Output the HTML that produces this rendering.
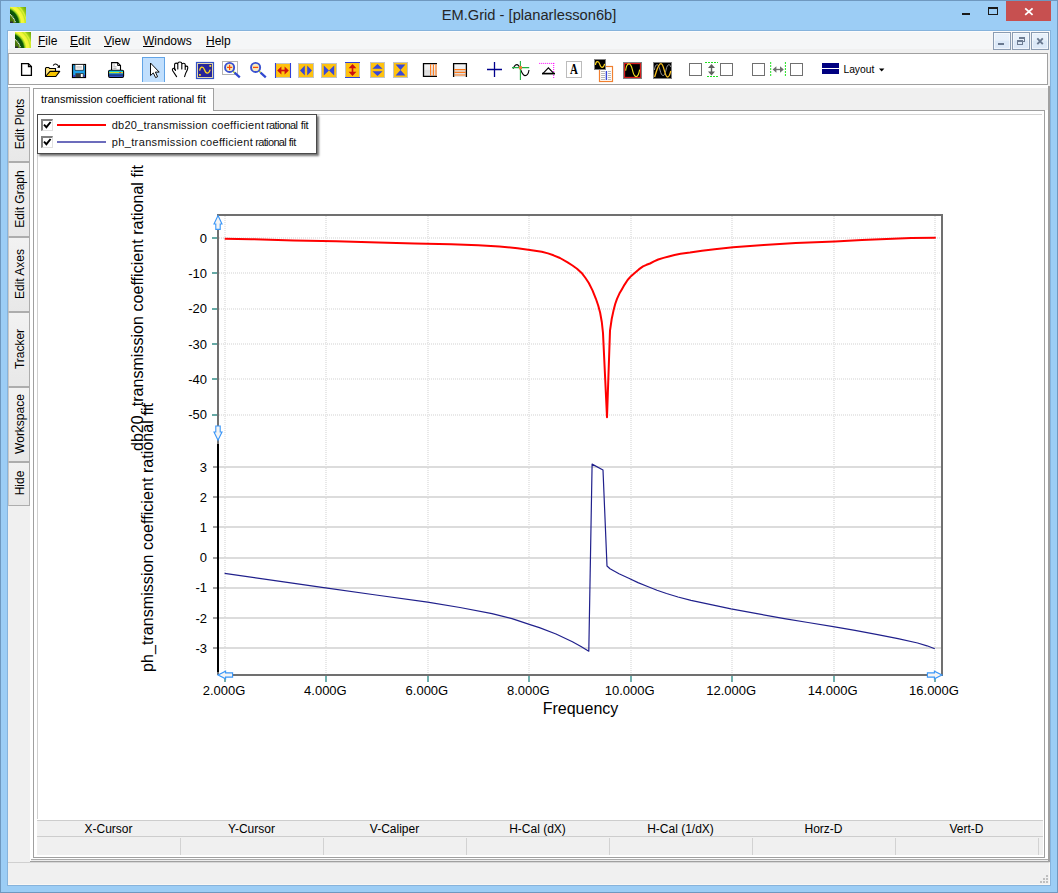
<!DOCTYPE html>
<html><head><meta charset="utf-8"><style>
*{box-sizing:border-box;margin:0;padding:0}
html,body{width:1058px;height:893px;overflow:hidden}
body{position:relative;background:#9ccdf5;font-family:"Liberation Sans",sans-serif;color:#000}
.a{position:absolute}
.t{position:absolute;white-space:nowrap;line-height:1}
svg{position:absolute;overflow:visible}
.vt{position:absolute;white-space:nowrap;line-height:1;transform-origin:0 0;transform:rotate(-90deg)}
.stab{position:absolute;left:8px;width:22px;background:#f0f0f0;border:1px solid #adadad;border-left-color:#c8c8c8}
.hd{position:absolute;top:822px;height:14px;font-size:12px;line-height:14px;text-align:center;white-space:nowrap;color:#000}
.sep{position:absolute;top:838px;width:1px;height:17px;background:#d2d2d2}
.mi{top:35px;font-size:12px;color:#000}
.mi u{text-decoration:underline;text-underline-offset:1px}
.mb{position:absolute;top:32px;width:18px;height:18px;border:1px solid #8b9cb2;box-shadow:inset 0 0 0 1px rgba(255,255,255,0.55);background:linear-gradient(#e9f1fb 0,#e7f0fa 45%,#dbe8f7 50%,#dde9f8 100%)}
.stab{background:linear-gradient(#f2f2f2,#e8e8e8)}
.vtc{position:absolute;left:19.8px;white-space:nowrap;line-height:1;font-size:12px;transform:translate(-50%,-50%) rotate(-90deg)}
.cb{position:absolute;left:41px;width:12px;height:12px;background:#fff;border:1px solid #e0e0e0;border-top:2px solid #808080;border-left:2px solid #808080}
</style></head><body>
<svg width="0" height="0" style="position:absolute"><defs>
<clipPath id="icl"><rect width="16" height="16"/></clipPath>
<radialGradient id="icg" gradientUnits="userSpaceOnUse" cx="-7" cy="17" r="30">
<stop offset="0.30" stop-color="#3c6a0a"/><stop offset="0.39" stop-color="#5f8a10"/>
<stop offset="0.41" stop-color="#0a4a08"/><stop offset="0.52" stop-color="#0c5a0a"/>
<stop offset="0.57" stop-color="#9fd820"/><stop offset="0.62" stop-color="#f6f93c"/><stop offset="0.70" stop-color="#f2f53a"/>
<stop offset="0.74" stop-color="#c0e626"/><stop offset="0.78" stop-color="#dcef34"/><stop offset="0.82" stop-color="#9ccf18"/><stop offset="0.9" stop-color="#78b00e"/><stop offset="1" stop-color="#6aa40a"/>
</radialGradient>

</defs></svg>
<!-- window frame -->
<div class="a" style="left:0;top:0;width:1058px;height:893px;border:1px solid #6f98bf"></div>
<div class="a" style="left:7px;top:30px;width:1044px;height:856px;border:1px solid #86b3dc"></div>
<!-- client bg -->
<div class="a" style="left:8px;top:31px;width:1042px;height:854px;background:#f0f0f0"></div>
<!-- TITLE -->
<div id="title">
<svg class="a" style="left:10px;top:7px" width="16" height="16" viewBox="0 0 16 16"><g clip-path="url(#icl)"><rect width="16" height="16" fill="url(#icg)"/>
<path d="M0 7.4 L2.6 9.6 L4.4 12.6 L5.7 16" fill="none" stroke="#f6f6f6" stroke-width="1.15" stroke-dasharray="1 0.7"/>
<rect x="0" y="14.5" width="3" height="1.5" fill="#2c2c3c"/>
</g></svg>
<div class="t" id="ttext" style="left:0;width:1058px;text-align:center;top:8px;font-size:14.7px;color:#262626">EM.Grid - [planarlesson6b]</div>
<div class="a" style="left:962px;top:13px;width:8px;height:2px;background:#1a1a1a"></div>
<div class="a" style="left:988px;top:7px;width:10px;height:8px;border:1px solid #1a1a1a;border-top-width:2px"></div>
<div class="a" style="left:1006px;top:1px;width:45px;height:20px;background:#c75050"></div>
<svg class="a" style="left:1023px;top:6px" width="12" height="11" viewBox="0 0 12 11"><path d="M2.2 2.3 L9.6 8.9 M9.6 2.3 L2.2 8.9" stroke="#fff" stroke-width="1.8" fill="none"/></svg>
</div>
<!-- MENU -->
<div id="menu">
<div class="a" style="left:8px;top:31px;width:1042px;height:18px;background:#f5f6f7;border-top:1px solid #fcfcfd;border-left:1px solid #fbfbfc"></div>
<svg class="a" style="left:15px;top:32px" width="16" height="16" viewBox="0 0 16 16"><g clip-path="url(#icl)"><rect width="16" height="16" fill="url(#icg)"/>
<path d="M0 7.4 L2.6 9.6 L4.4 12.6 L5.7 16" fill="none" stroke="#f6f6f6" stroke-width="1.15" stroke-dasharray="1 0.7"/>
<rect x="0" y="14.5" width="3" height="1.5" fill="#2c2c3c"/>
</g></svg>
<div class="t mi" style="left:38px"><u>F</u>ile</div>
<div class="t mi" style="left:70px"><u>E</u>dit</div>
<div class="t mi" style="left:104px"><u>V</u>iew</div>
<div class="t mi" style="left:143px"><u>W</u>indows</div>
<div class="t mi" style="left:206px"><u>H</u>elp</div>
<div class="mb" style="left:993px"><div class="a" style="left:4px;top:10px;width:6px;height:2px;background:#697990"></div></div>
<div class="mb" style="left:1012px"><svg width="16" height="16" viewBox="0 0 16 16" style="left:0;top:0" shape-rendering="crispEdges"><g fill="#6d7c92"><rect x="6" y="4" width="6" height="2"/><rect x="11" y="6" width="1" height="3"/><rect x="10" y="8" width="2" height="1"/><rect x="4" y="7" width="6" height="2"/><rect x="4" y="9" width="1" height="3"/><rect x="9" y="9" width="1" height="3"/><rect x="4" y="11" width="6" height="1"/></g></svg></div>
<div class="mb" style="left:1031px"><svg width="16" height="16" viewBox="0 0 16 16" style="left:0;top:0"><path d="M5.3 5.4 L10.8 11.2 M10.8 5.4 L5.3 11.2" stroke="#697990" stroke-width="1.9" fill="none"/></svg></div>
</div>
<!-- TOOLBAR -->
<div id="toolbar">
<div class="a" style="left:8px;top:53px;width:1040px;height:32px;background:#fff;border:1px solid #a0a0a0;border-left-color:#b4b4b4"></div>
<div id="icons">
<div class="a" style="left:142px;top:57px;width:23px;height:25px;background:#c1dffd;border:1px solid #62a4e6;border-bottom:none"></div>
<svg style="left:0;top:0" width="1058" height="100" viewBox="0 0 1058 100">
<!-- new -->
<path d="M21.6 63.6 H28.4 L31.4 66.6 V75.4 H21.6 Z" fill="#fff" stroke="#000" stroke-width="1.3"/>
<path d="M28.4 63.6 V66.6 H31.4" fill="none" stroke="#000" stroke-width="1.1"/>
<!-- open -->
<path d="M45.5 76.5 V68.5 L46.2 67.5 H48.8 L49.5 68.5 H55.5 V71.5" fill="#ffe680" stroke="#000" stroke-width="1.1"/>
<path d="M45.5 76.5 L50 71.4 H59.7 L55.8 76.5 Z" fill="#f5c400" stroke="#000" stroke-width="1.1" stroke-linejoin="round"/>
<path d="M53.2 65.6 Q54 63.8 55.8 64 Q57.6 64.3 59 67" fill="none" stroke="#000" stroke-width="1.1"/>
<path d="M57 67.8 H60 V64.8 Z" fill="#000"/>
<!-- save -->
<rect x="72.5" y="64.5" width="13" height="13" fill="#1fa2ea" stroke="#000" stroke-width="1.2"/>
<rect x="73.2" y="75" width="2" height="2" fill="#3838c8"/><rect x="83.8" y="75" width="1.2" height="2" fill="#3838c8"/>
<rect x="75" y="64.8" width="8.5" height="5.4" fill="#fff"/><path d="M75 65 V70.3 H83.5 V65" fill="none" stroke="#202020" stroke-width="0.7"/>
<rect x="76.3" y="66" width="5.6" height="2.6" fill="#d6d6d6"/>
<rect x="75.4" y="73.2" width="8.3" height="4" fill="#3a3a3a"/><rect x="80.8" y="74" width="2" height="3" fill="#fff"/>
<rect x="84" y="65.2" width="1" height="1" fill="#b0b0b0"/>
<!-- print -->
<path d="M111.6 70 V62.6 H117.6 L120.5 65.5 V70" fill="#fff" stroke="#000" stroke-width="1.1"/>
<path d="M117.6 62.6 V65.5 H120.5" fill="none" stroke="#000" stroke-width="0.9"/>
<path d="M113.3 65 H115 M113.3 66.8 H116.5 M113.3 68.4 H116.5" stroke="#909090" stroke-width="0.7"/>
<rect x="108.6" y="70.2" width="15" height="7.3" rx="1.4" fill="#3050c0" stroke="#000" stroke-width="1.1"/>
<rect x="109.2" y="70.8" width="13.8" height="1.2" fill="#10c8d8"/>
<rect x="109.2" y="72" width="13.8" height="1.3" fill="#c8e428"/><rect x="119.3" y="72" width="1.8" height="1.3" fill="#f03030"/>
<rect x="109.2" y="73.3" width="13.8" height="1.2" fill="#20a0d8"/>
<rect x="109.2" y="74.5" width="13.8" height="1" fill="#102468"/>
<!-- arrow cursor -->
<path d="M150.5 63 V75.6 L153.3 72.9 L155.6 77.6 L157.6 76.7 L155.4 72.1 H159.2 Z" fill="#fff" stroke="#000" stroke-width="0.95" stroke-linejoin="miter"/>
<!-- hand -->
<path d="M176.6 76.6 L172.7 70.8 C171.9 69.2 172.7 68.2 173.9 68.2 C175 68.2 175.4 69.2 175.4 70.4 M174.6 69.4 V64.4 C174.6 62.7 177.8 62.7 177.8 64.4 V69 M177.8 64.4 V63.4 C177.8 61.5 181.8 61.5 181.8 63.4 V69 M181.8 64.6 C181.8 62.8 185.2 62.8 185.2 64.6 V69.4 M185.2 67.4 C185.4 65.6 187.9 65.8 187.8 67.6 C187.7 70 186.6 71.4 185.7 73.2 L184.6 76.6" fill="none" stroke="#000" stroke-width="1.1" stroke-linecap="round" stroke-linejoin="round"/>
<!-- wave box -->
<rect x="196.5" y="62.5" width="17" height="16" fill="#f3e4a8" stroke="#3454c8" stroke-width="1.2"/>
<rect x="198" y="64" width="14" height="13" fill="#26269c"/>
<path d="M199.6 70.6 C200.6 66.4 203 66 204.6 70 C206 74 208.6 74.4 210.2 69.6" fill="none" stroke="#ffd820" stroke-width="1.3"/>
<rect x="209.4" y="65" width="1.8" height="1.8" fill="#ffd820"/><rect x="199" y="74" width="1.8" height="1.8" fill="#ffd820"/>
<!-- zoom in -->
<rect x="222.5" y="61.5" width="15" height="13" fill="#fff" stroke="#b4b4b4" stroke-width="1"/>
<path d="M233 71.2 L234.8 73" stroke="#a8c830" stroke-width="1.6"/>
<path d="M234.6 72.6 L239.8 77.4" stroke="#3048d0" stroke-width="2.2"/>
<circle cx="229.6" cy="67.4" r="4.55" fill="#f6ebbe" stroke="#3a50d0" stroke-width="1.9"/>
<path d="M227 67.4 H232.2 M229.6 64.8 V70" stroke="#ff4a00" stroke-width="1.2"/>
<!-- zoom out -->
<path d="M259 71 L260.8 72.8" stroke="#a8c830" stroke-width="1.6"/>
<path d="M260.6 72.6 L265.8 77.4" stroke="#3048d0" stroke-width="2.2"/>
<circle cx="255.6" cy="67.4" r="4.55" fill="#f6ebbe" stroke="#3a50d0" stroke-width="1.9"/>
<path d="M253 67.4 H258.2" stroke="#ff4a00" stroke-width="1.3"/>
<!-- hfit -->
<rect x="275" y="63.5" width="16" height="14" fill="#ffc20e"/><path d="M275 63.5 H291 M275 77.5 H291" stroke="#c4c4c4" stroke-width="1"/>
<path d="M275.5 63 V78 M290.5 63 V78" stroke="#3040d8" stroke-width="1.1"/>
<path d="M277.2 70.5 L281.4 66.6 V74.4 Z M288.8 70.5 L284.6 66.6 V74.4 Z" fill="#cc1010"/><path d="M280 70.5 H286" stroke="#cc1010" stroke-width="1.6"/>
<!-- hexpand -->
<rect x="298.5" y="63.5" width="15" height="14" fill="#ffc20e" stroke="#c4c4c4" stroke-width="1"/>
<path d="M300 70.5 L304.8 65.4 V75.6 Z M312 70.5 L307.2 65.4 V75.6 Z" fill="#3848d8"/>
<!-- hcontract -->
<rect x="321.5" y="63.5" width="15" height="14" fill="#ffc20e" stroke="#c4c4c4" stroke-width="1"/>
<path d="M323.8 65.4 L329 70.5 L323.8 75.6 Z M334.2 65.4 L329 70.5 L334.2 75.6 Z" fill="#3848d8"/>
<!-- vfit -->
<rect x="345.5" y="62.5" width="14" height="15" fill="#ffc20e"/><path d="M345.5 62.5 V77.5 M359.5 62.5 V77.5" stroke="#c4c4c4" stroke-width="1"/>
<path d="M345 62.5 H360 M345 77.5 H360" stroke="#3040d8" stroke-width="1.1"/>
<path d="M352.5 64 L356.4 68.2 H348.6 Z M352.5 76 L356.4 71.8 H348.6 Z" fill="#cc1010"/><path d="M352.5 67 V73" stroke="#cc1010" stroke-width="1.6"/>
<!-- vexpand -->
<rect x="370.5" y="62.5" width="14" height="15" fill="#ffc20e" stroke="#c4c4c4" stroke-width="1"/>
<path d="M377.5 64 L382.6 68.8 H372.4 Z M377.5 76 L382.6 71.2 H372.4 Z" fill="#3848d8"/>
<!-- vcontract -->
<rect x="393.5" y="62.5" width="14" height="15" fill="#ffc20e" stroke="#c4c4c4" stroke-width="1"/>
<path d="M395.6 64.6 H405.4 L400.5 70 Z M395.6 75.4 H405.4 L400.5 70 Z" fill="#3848d8"/>
<!-- vcursors -->
<defs><linearGradient id="gg" x1="0" y1="0" x2="0" y2="1"><stop offset="0" stop-color="#f6f6f6"/><stop offset="0.5" stop-color="#ececec"/><stop offset="0.55" stop-color="#dcdcdc"/><stop offset="1" stop-color="#e6e6e6"/></linearGradient></defs>
<rect x="423.5" y="63.5" width="13.5" height="13" fill="url(#gg)"/>
<path d="M437 63.6 H423.5 V76.4 H437" fill="none" stroke="#000" stroke-width="1.3"/>
<path d="M430.6 64.2 V75.8 M433.4 64.2 V75.8 M436 64.2 V75.8" stroke="#ff7a1a" stroke-width="1.1"/>
<!-- hcursors -->
<rect x="453.5" y="63.5" width="13" height="13.5" fill="url(#gg)"/>
<path d="M453.6 77 V63.6 H466.4 V77" fill="none" stroke="#000" stroke-width="1.3"/>
<path d="M454.2 69.6 H465.8 M454.2 72.4 H465.8 M454.2 75 H465.8" stroke="#ff7a1a" stroke-width="1.1"/>
<!-- plus -->
<path d="M487 69.5 H502 M494.5 62 V77" stroke="#00008c" stroke-width="1.3"/>
<!-- curve cursor -->
<path d="M513.2 68.6 C514.4 65.4 516.6 63.4 518.6 65.6 C520.6 68 521.8 75.4 524.8 75.6 C527.2 75.8 528.6 73 529 70" fill="none" stroke="#000" stroke-width="1.1"/>
<path d="M512 67.6 H529.2 M520.4 61 V80" stroke="#22b040" stroke-width="1.1"/>
<rect x="519" y="66.2" width="3" height="3" fill="#f08030"/>
<!-- slope -->
<path d="M539.2 63.4 H554.2" stroke="#ff00ff" stroke-width="1" stroke-dasharray="1 1"/>
<path d="M553.7 63 V78" stroke="#ff00ff" stroke-width="1" stroke-dasharray="1 1"/>
<path d="M542.8 73.6 L548.4 67.8 L554 73.6" fill="none" stroke="#000" stroke-width="1.1"/><path d="M542 73.6 H555" stroke="#000" stroke-width="1.7"/>
<!-- A -->
<rect x="566.5" y="61.5" width="15" height="16" fill="#fff" stroke="#bcbcbc" stroke-width="1"/>
<text transform="translate(574 74.4) scale(0.78 1)" font-family="Liberation Serif" font-weight="bold" font-size="14" text-anchor="middle" fill="#000">A</text>
<!-- wave+doc -->
<rect x="599.5" y="66.5" width="13" height="15" fill="#fff" stroke="#f08030" stroke-width="1.2"/>
<g shape-rendering="crispEdges" fill="#b8b8b8"><rect x="601" y="71" width="4" height="1"/><rect x="608" y="71" width="3" height="1"/><rect x="601" y="73" width="4" height="1"/><rect x="608" y="73" width="3" height="1"/><rect x="601" y="75" width="4" height="1"/><rect x="608" y="75" width="3" height="1"/><rect x="601" y="77" width="4" height="1"/><rect x="608" y="77" width="3" height="1"/><rect x="601" y="79" width="4" height="1"/><rect x="608" y="79" width="3" height="1"/></g>
<rect x="605.7" y="71" width="1.4" height="9" fill="#3848d8"/>
<rect x="594.5" y="59.5" width="11" height="10" fill="#000" stroke="#808080" stroke-width="1"/>
<path d="M595.4 65 C596 60.6 598.6 60.4 599.8 64.4 C601 68.4 603.4 68.6 604.6 63.8" fill="none" stroke="#ffd820" stroke-width="1.2"/>
<!-- red wave box -->
<rect x="623.5" y="62.5" width="18" height="16" fill="#000" stroke="#808080" stroke-width="1"/>
<rect x="624.6" y="63.6" width="15.8" height="13.8" fill="none" stroke="#e02020" stroke-width="1.1"/>
<path d="M625.6 70.6 C626.8 61.8 630.6 61.6 632.5 70.2 C634.4 78.8 638.2 78.8 639.6 69.6" fill="none" stroke="#f8e820" stroke-width="1.1"/>
<!-- two wave box -->
<rect x="653.5" y="62.5" width="18" height="16" fill="#000" stroke="#808080" stroke-width="1"/>
<path d="M654.4 70 C655.4 63 658.4 62.6 660 70 C661.6 77.2 664.6 77.6 666 70 C667.2 64 669.6 63 670.8 67" fill="none" stroke="#909090" stroke-width="1"/>
<path d="M654.6 77 C656.4 72 658 63.6 661 63.6 C664 63.6 664.6 77 667.6 77 C669.4 77 670 73.6 670.8 71" fill="none" stroke="#f8c020" stroke-width="1.3"/>
<!-- squares + arrows -->
<rect x="689.5" y="63.5" width="12" height="12" fill="#fff" stroke="#707070" stroke-width="1"/>
<rect x="720.5" y="63.5" width="12" height="12" fill="#fff" stroke="#707070" stroke-width="1"/>
<path d="M705 62.5 H718 M707 76.5 H718" stroke="#20e020" stroke-width="1" stroke-dasharray="2 1"/>
<path d="M711.5 64 L715 68 H708 Z M711.5 75.4 L715 71.4 H708 Z" fill="#606060"/><path d="M711.5 67 V72" stroke="#606060" stroke-width="1.4"/>
<rect x="752.5" y="63.5" width="12" height="12" fill="#fff" stroke="#707070" stroke-width="1"/>
<rect x="790.5" y="63.5" width="12" height="12" fill="#fff" stroke="#707070" stroke-width="1"/>
<path d="M770.7 62 V76 M785.4 62 V76" stroke="#20e020" stroke-width="1" stroke-dasharray="2 1"/>
<path d="M772.6 69.5 L776.4 66.2 V72.8 Z M783.8 69.5 L780 66.2 V72.8 Z" fill="#707070"/><path d="M775.4 69.5 H781" stroke="#707070" stroke-width="1.3"/>
<!-- layout -->
<rect x="822" y="63" width="17" height="5" fill="#000080"/><rect x="822" y="69" width="17" height="5" fill="#000080"/>
<text x="843.4" y="72.6" font-family="Liberation Sans" font-size="11" textLength="31" lengthAdjust="spacingAndGlyphs" fill="#000">Layout</text>
<path d="M879 68.5 H884.4 L881.7 71.4 Z" fill="#000"/>
</svg>
</div>
</div>
<!-- MDI -->
<div id="mdi">
<div class="a" style="left:8px;top:85px;width:1040px;height:777px;background:#fff"></div>
<div class="a" style="left:1048px;top:86px;width:2px;height:776px;background:#a0a0a0"></div>
<div class="a" style="left:8px;top:88px;width:22px;height:774px;background:#f0f0f0"></div>
<div class="stab" style="top:87px;height:75px"></div><div class="vtc" style="top:123.7px">Edit Plots</div>
<div class="stab" style="top:162px;height:75px"></div><div class="vtc" style="top:198.7px">Edit Graph</div>
<div class="stab" style="top:237px;height:75px"></div><div class="vtc" style="top:273.7px">Edit Axes</div>
<div class="stab" style="top:312px;height:75px"></div><div class="vtc" style="top:348.7px">Tracker</div>
<div class="stab" style="top:387px;height:75px"></div><div class="vtc" style="top:423.7px">Workspace</div>
<div class="stab" style="top:462px;height:44px"></div><div class="vtc" style="top:483.2px">Hide</div>

<!-- tab strip -->
<div class="a" style="left:33px;top:88px;width:1015px;height:22px;background:#f0f0f0"></div>
<div class="a" style="left:33px;top:110px;width:1012px;height:748px;background:#fff;border:1px solid #a0a0a0"></div>
<div class="a" style="left:33px;top:88px;width:181px;height:23px;background:#fff;border:1px solid #a0a0a0;border-bottom:none"></div>
<div class="t" style="left:41px;top:94px;font-size:11px">transmission coefficient rational fit</div>
<!-- plot area borders -->
<div class="a" style="left:37px;top:114px;width:1005px;height:1px;background:#d4d4d4"></div>
<div class="a" style="left:37px;top:114px;width:1px;height:705px;background:#d0d0d0"></div>
<div id="chart">
<svg style="left:0;top:0" width="1058" height="893" viewBox="0 0 1058 893" font-family="Liberation Sans" fill="#000">
<g shape-rendering="crispEdges">
<line x1="225" y1="216" x2="225" y2="674" stroke="#e8e8e8" stroke-width="2" stroke-dasharray="1 1"/>
<line x1="326" y1="216" x2="326" y2="674" stroke="#e8e8e8" stroke-width="2" stroke-dasharray="1 1"/>
<line x1="428" y1="216" x2="428" y2="674" stroke="#e8e8e8" stroke-width="2" stroke-dasharray="1 1"/>
<line x1="529" y1="216" x2="529" y2="674" stroke="#e8e8e8" stroke-width="2" stroke-dasharray="1 1"/>
<line x1="631" y1="216" x2="631" y2="674" stroke="#e8e8e8" stroke-width="2" stroke-dasharray="1 1"/>
<line x1="732" y1="216" x2="732" y2="674" stroke="#e8e8e8" stroke-width="2" stroke-dasharray="1 1"/>
<line x1="834" y1="216" x2="834" y2="674" stroke="#e8e8e8" stroke-width="2" stroke-dasharray="1 1"/>
<line x1="935" y1="216" x2="935" y2="674" stroke="#e8e8e8" stroke-width="2" stroke-dasharray="1 1"/>
<line x1="219" y1="238" x2="941" y2="238" stroke="#e8e8e8" stroke-width="2" stroke-dasharray="1 1"/>
<line x1="219" y1="273" x2="941" y2="273" stroke="#e8e8e8" stroke-width="2" stroke-dasharray="1 1"/>
<line x1="219" y1="309" x2="941" y2="309" stroke="#e8e8e8" stroke-width="2" stroke-dasharray="1 1"/>
<line x1="219" y1="344" x2="941" y2="344" stroke="#e8e8e8" stroke-width="2" stroke-dasharray="1 1"/>
<line x1="219" y1="379" x2="941" y2="379" stroke="#e8e8e8" stroke-width="2" stroke-dasharray="1 1"/>
<line x1="219" y1="415" x2="941" y2="415" stroke="#e8e8e8" stroke-width="2" stroke-dasharray="1 1"/>
<rect x="219" y="466" width="722" height="2" fill="#dcdcdc"/>
<rect x="219" y="496" width="722" height="2" fill="#dcdcdc"/>
<rect x="219" y="526" width="722" height="2" fill="#dcdcdc"/>
<rect x="219" y="557" width="722" height="2" fill="#dcdcdc"/>
<rect x="219" y="587" width="722" height="2" fill="#dcdcdc"/>
<rect x="219" y="617" width="722" height="2" fill="#dcdcdc"/>
<rect x="219" y="647" width="722" height="2" fill="#dcdcdc"/>
<rect x="217" y="214" width="726" height="2" fill="#707070"/>
<rect x="941" y="214" width="2" height="462" fill="#707070"/>
<rect x="217" y="229" width="2" height="215" fill="#707070"/>
<rect x="217" y="444" width="2" height="228" fill="#000"/>
<rect x="217" y="672" width="2" height="3" fill="#707070"/>
<rect x="232" y="674" width="711" height="2" fill="#707070"/>
<rect x="212" y="237" width="5" height="2" fill="#66aaa6"/>
<rect x="212" y="272" width="5" height="2" fill="#66aaa6"/>
<rect x="212" y="308" width="5" height="2" fill="#66aaa6"/>
<rect x="212" y="343" width="5" height="2" fill="#66aaa6"/>
<rect x="212" y="378" width="5" height="2" fill="#66aaa6"/>
<rect x="212" y="414" width="5" height="2" fill="#66aaa6"/>
<rect x="213" y="466" width="4" height="2" fill="#a0a0a0"/>
<rect x="213" y="496" width="4" height="2" fill="#a0a0a0"/>
<rect x="213" y="526" width="4" height="2" fill="#a0a0a0"/>
<rect x="213" y="557" width="4" height="2" fill="#a0a0a0"/>
<rect x="213" y="587" width="4" height="2" fill="#a0a0a0"/>
<rect x="213" y="617" width="4" height="2" fill="#a0a0a0"/>
<rect x="213" y="647" width="4" height="2" fill="#a0a0a0"/>
<rect x="224" y="676" width="2" height="6" fill="#70b0ae"/>
<rect x="325" y="676" width="2" height="6" fill="#70b0ae"/>
<rect x="427" y="676" width="2" height="6" fill="#70b0ae"/>
<rect x="528" y="676" width="2" height="6" fill="#70b0ae"/>
<rect x="630" y="676" width="2" height="6" fill="#70b0ae"/>
<rect x="731" y="676" width="2" height="6" fill="#70b0ae"/>
<rect x="833" y="676" width="2" height="6" fill="#70b0ae"/>
<rect x="934" y="676" width="2" height="6" fill="#70b0ae"/>
</g>
<path d="M218 215.6 L222 224 H220.2 V229.4 H215.8 V224 H214 Z" fill="#f4f4f4" stroke="#3a96f7" stroke-width="1.1" stroke-linejoin="miter"/>
<path d="M218 440.2 L222 432 H220.2 V426 H215.8 V432 H214 Z" fill="#f4f4f4" stroke="#3a96f7" stroke-width="1.1" stroke-linejoin="miter"/>
<path d="M218 675 L225.6 671.2 V672.9 H232.6 V677.1 H225.6 V678.8 Z" fill="#f4f4f4" stroke="#3a96f7" stroke-width="1.1" stroke-linejoin="miter"/>
<path d="M942 675 L934.4 671.2 V672.9 H927.4 V677.1 H934.4 V678.8 Z" fill="#f4f4f4" stroke="#3a96f7" stroke-width="1.1" stroke-linejoin="miter"/>
<polyline points="224.7,238.7 251.3,239.2 293.6,240.4 336.0,241.3 378.3,242.5 414.6,243.4 451.0,244.3 478.2,245.2 499.3,246.4 517.5,248.2 530.0,249.9 541.8,251.8 548.0,253.4 553.5,255.3 560.0,258.0 567.6,262.4 572.5,265.5 577.0,268.7 582.2,273.6 585.5,278.0 588.8,283.0 592.5,290.4 595.9,298.8 598.2,305.5 600.1,312.5 601.8,322.0 603.0,333.0 607.0,417.2 610.0,330.6 611.7,319.0 613.5,310.6 615.2,304.0 617.0,298.8 619.4,293.6 621.8,289.4 624.6,284.6 627.6,280.0 631.0,276.2 634.7,273.0 638.8,269.4 643.0,266.4 646.5,264.8 650.0,263.5 654.0,261.4 658.2,259.5 663.5,257.9 668.8,256.5 674.5,255.0 680.6,253.7 690.0,252.6 702.0,250.8 714.6,249.2 733.0,247.3 763.7,245.1 795.7,243.1 835.0,241.4 862.0,240.1 886.6,238.9 911.2,238.0 935.8,237.8" fill="none" stroke="#ff0000" stroke-width="2" stroke-linejoin="round"/>
<polyline points="224.6,573.3 275.0,580.6 325.5,587.9 376.0,595.0 427.6,602.1 460.0,607.5 492.0,613.6 512.0,618.6 530.0,624.6 539.4,627.6 556.0,634.0 572.4,641.8 581.0,646.6 588.8,651.2 592.1,464.1 603.0,470.0 607.0,566.0 610.0,568.8 619.0,573.8 628.8,578.2 638.0,582.6 647.6,586.5 657.0,590.2 666.5,593.5 678.0,597.0 691.0,600.3 711.0,604.6 731.0,608.8 757.0,613.6 784.3,618.6 808.0,622.5 833.2,626.6 855.0,630.4 877.6,634.6 898.0,638.6 917.6,643.0 927.0,645.8 934.8,648.8" fill="none" stroke="#20208c" stroke-width="1.2" stroke-linejoin="round"/>
<text x="207" y="242.7" font-size="13" text-anchor="end">0</text>
<text x="207" y="278.1" font-size="13" text-anchor="end">-10</text>
<text x="207" y="313.4" font-size="13" text-anchor="end">-20</text>
<text x="207" y="348.8" font-size="13" text-anchor="end">-30</text>
<text x="207" y="384.1" font-size="13" text-anchor="end">-40</text>
<text x="207" y="419.4" font-size="13" text-anchor="end">-50</text>
<text x="207" y="471.7" font-size="13" text-anchor="end">3</text>
<text x="207" y="501.9" font-size="13" text-anchor="end">2</text>
<text x="207" y="532.0" font-size="13" text-anchor="end">1</text>
<text x="207" y="562.2" font-size="13" text-anchor="end">0</text>
<text x="207" y="592.4" font-size="13" text-anchor="end">-1</text>
<text x="207" y="622.6" font-size="13" text-anchor="end">-2</text>
<text x="207" y="652.7" font-size="13" text-anchor="end">-3</text>
<text x="224.0" y="694.8" font-size="13" text-anchor="middle">2.000G</text>
<text x="325.4" y="694.8" font-size="13" text-anchor="middle">4.000G</text>
<text x="426.9" y="694.8" font-size="13" text-anchor="middle">6.000G</text>
<text x="528.3" y="694.8" font-size="13" text-anchor="middle">8.000G</text>
<text x="629.7" y="694.8" font-size="13" text-anchor="middle">10.000G</text>
<text x="731.2" y="694.8" font-size="13" text-anchor="middle">12.000G</text>
<text x="832.6" y="694.8" font-size="13" text-anchor="middle">14.000G</text>
<text x="934.0" y="694.8" font-size="13" text-anchor="middle">16.000G</text>
<text x="580.5" y="713.5" font-size="16" text-anchor="middle">Frequency</text>
<text transform="translate(142.5 451) rotate(-90)" font-size="16" textLength="286" lengthAdjust="spacing">db20_transmission coefficient rational fit</text>
<text transform="translate(153 672) rotate(-90)" font-size="16" textLength="269" lengthAdjust="spacing">ph_transmission coefficient rational fit</text>
</svg>
</div>
<div id="legend">
<div class="a" style="left:37px;top:114px;width:280px;height:40px;background:#fff;border:1px solid #4a4a4a;box-shadow:2px 2px 2px rgba(0,0,0,0.55)"></div>
<div class="cb" style="top:119px"></div><div class="cb" style="top:136px"></div>
<svg style="left:0;top:0" width="330" height="160" viewBox="0 0 330 160">
<path d="M44 124.6 L46.4 127.2 L50.6 122" fill="none" stroke="#000" stroke-width="1.9"/>
<path d="M44 141.6 L46.4 144.2 L50.6 139" fill="none" stroke="#000" stroke-width="1.9"/>
<rect x="57" y="124" width="49" height="2" fill="#ff0000"/>
<rect x="57" y="141" width="49" height="2" fill="#6c6cbc"/>
<g font-family="Liberation Sans" font-size="11" fill="#111"><text x="111.7" y="128.6" textLength="96">db20_transmission</text><text x="211.4" y="128.6" textLength="52.6">coefficient</text><text x="266" y="128.6" textLength="32">rational</text><text x="300.8" y="128.6" textLength="7.8">fit</text>
<text x="111.7" y="145.6" textLength="85.3">ph_transmission</text><text x="200.2" y="145.6" textLength="52.6">coefficient</text><text x="255.2" y="145.6" textLength="31.6">rational</text><text x="288.8" y="145.6" textLength="7.6">fit</text></g>
</svg>
</div>
<!-- table -->
<div class="a" style="left:37px;top:820px;width:1006px;height:35px;background:#f0f0f0;border-top:1px solid #cdcdcd"></div>
<div class="a" style="left:37px;top:836px;width:1006px;height:1px;background:#cdcdcd"></div>
<div class="hd" style="left:37px;width:143px">X-Cursor</div><div class="sep" style="left:180px"></div>
<div class="hd" style="left:180px;width:143px">Y-Cursor</div><div class="sep" style="left:323px"></div>
<div class="hd" style="left:323px;width:143px">V-Caliper</div><div class="sep" style="left:466px"></div>
<div class="hd" style="left:466px;width:143px">H-Cal (dX)</div><div class="sep" style="left:609px"></div>
<div class="hd" style="left:609px;width:143px">H-Cal (1/dX)</div><div class="sep" style="left:752px"></div>
<div class="hd" style="left:752px;width:143px">Horz-D</div><div class="sep" style="left:895px"></div>
<div class="hd" style="left:895px;width:143px">Vert-D</div><div class="sep" style="left:1038px"></div>

<!-- bottom lines -->
<div class="a" style="left:31px;top:859px;width:1017px;height:1px;background:#ababab"></div>
<div class="a" style="left:31px;top:860px;width:1017px;height:1px;background:#ececec"></div>
<div class="a" style="left:30px;top:861px;width:1020px;height:1px;background:#a0a0a0"></div>
<!-- status -->
<div class="a" style="left:8px;top:862px;width:1042px;height:23px;background:#f0f0f0;border-top:1px solid #d7d7d7;border-right:1px solid #f9f7f4;border-bottom:1px solid #f9f7f4"></div>
<div class="a" style="left:8px;top:862px;width:22px;height:1px;background:#d0d0d0"></div>
<svg style="left:1038px;top:873px" width="12" height="12" viewBox="0 0 12 12" shape-rendering="crispEdges"><g fill="#bfbfbf"><rect x="8" y="2" width="2" height="2"/><rect x="5" y="5" width="2" height="2"/><rect x="8" y="5" width="2" height="2"/><rect x="2" y="8" width="2" height="2"/><rect x="5" y="8" width="2" height="2"/><rect x="8" y="8" width="2" height="2"/></g></svg>
</div>
</body></html>
